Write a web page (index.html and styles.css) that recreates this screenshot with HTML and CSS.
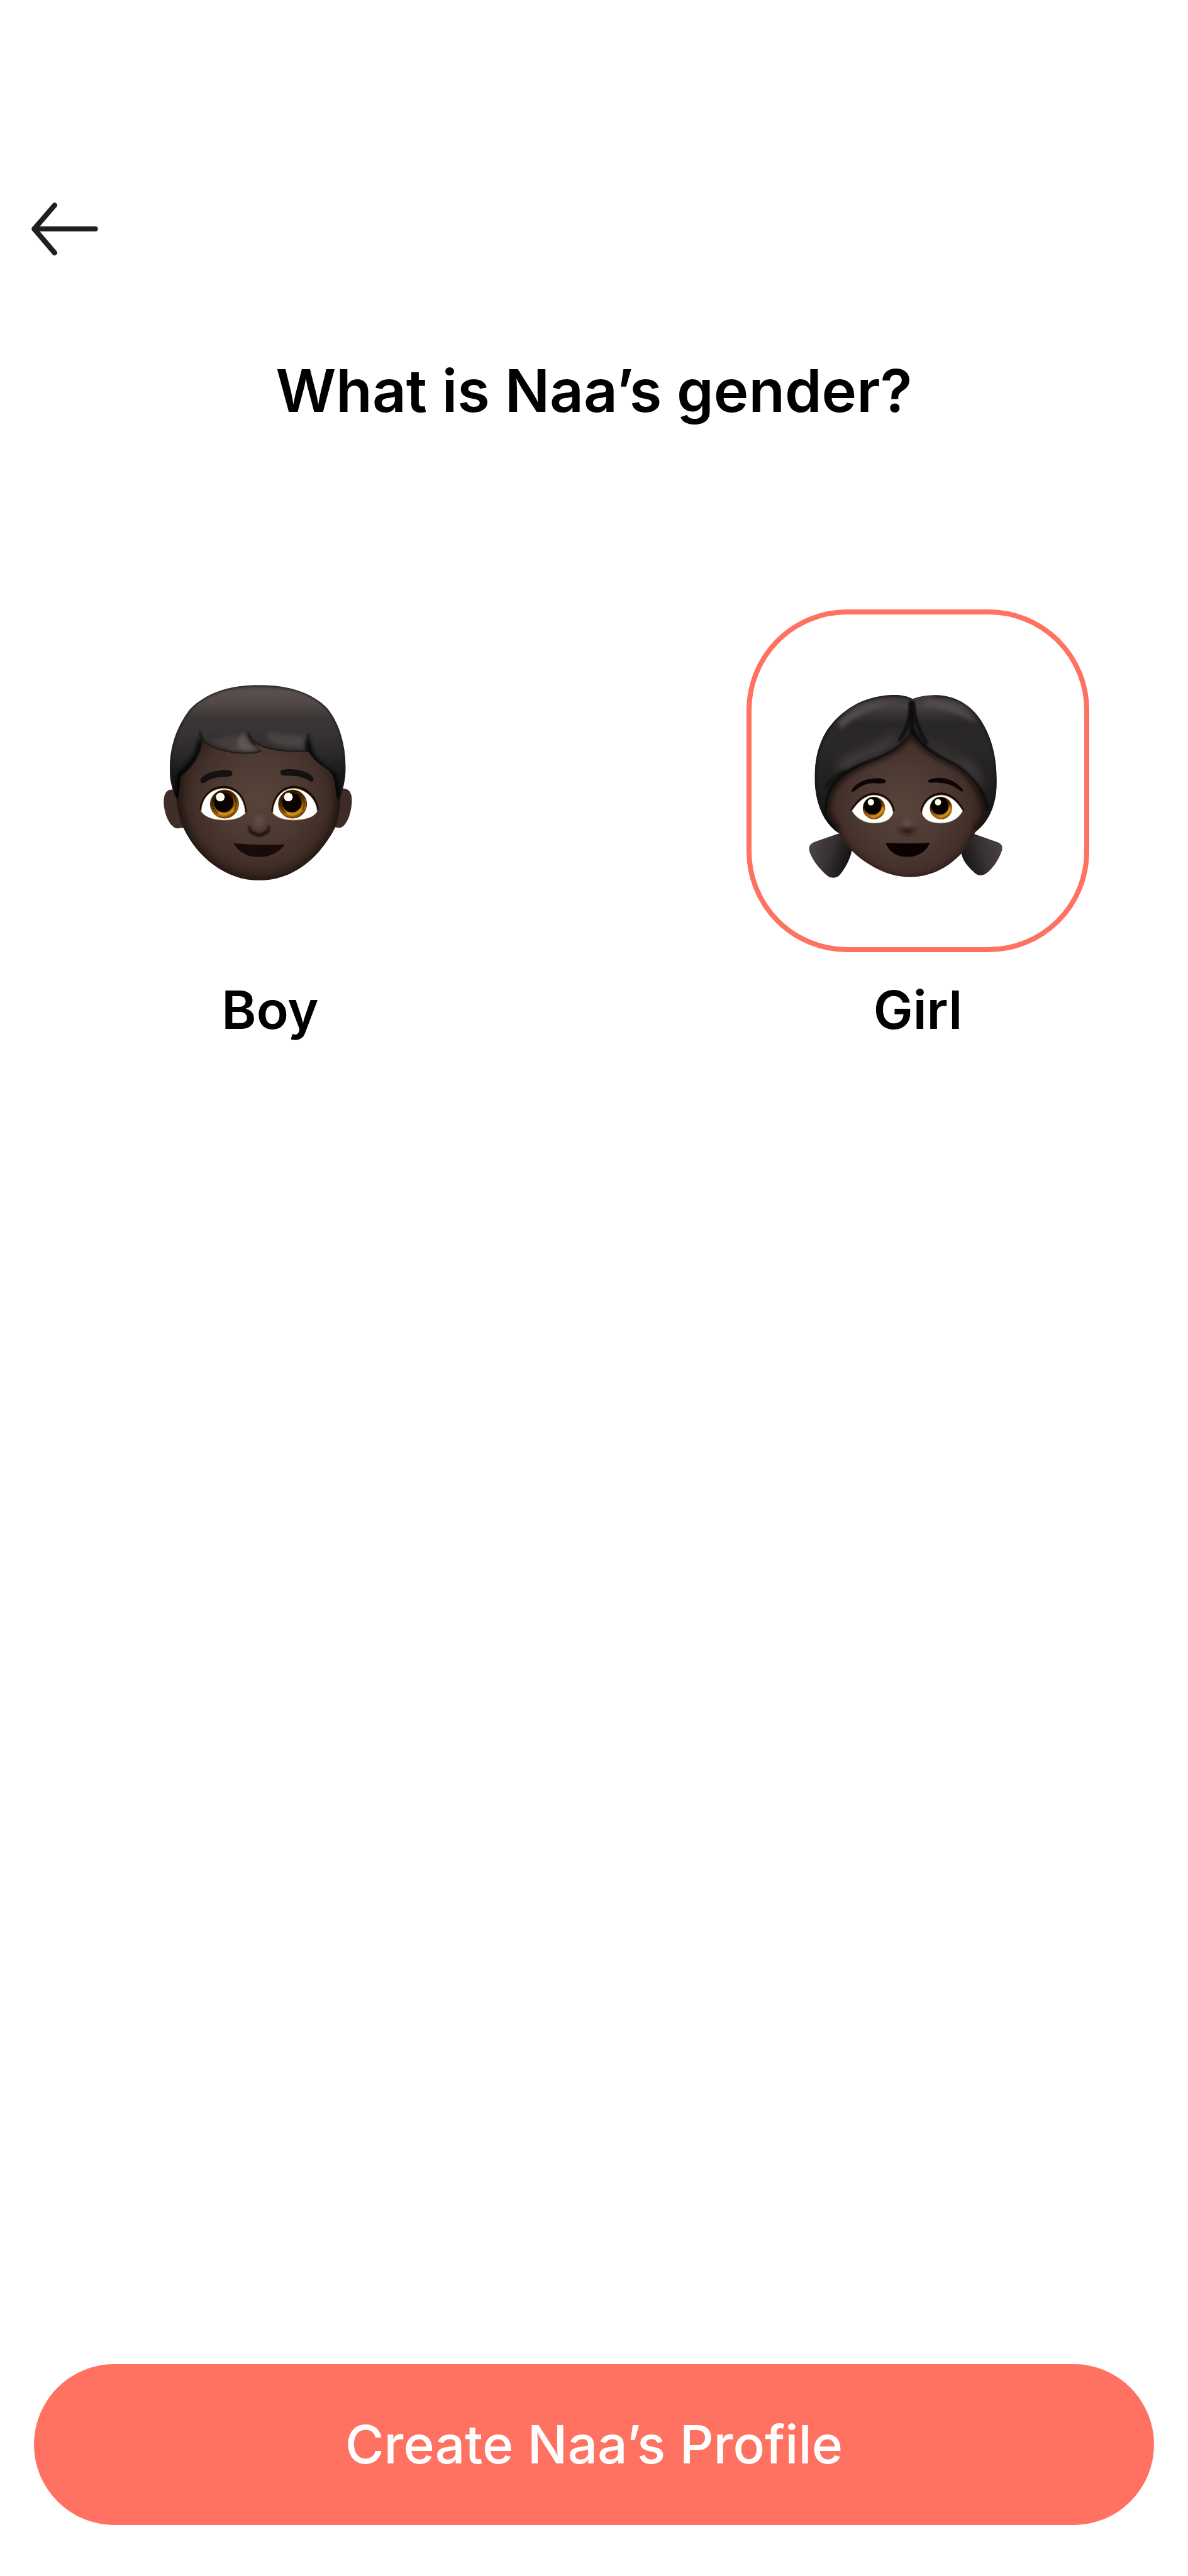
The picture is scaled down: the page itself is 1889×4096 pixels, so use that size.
FILE: index.html
```html
<!DOCTYPE html>
<html lang="en">
<head>
<meta charset="utf-8">
<meta name="viewport" content="width=device-width, initial-scale=1">
<title>Create profile</title>
<link rel="stylesheet" href="styles.css">
</head>
<body>
<form class="screen">
  <button class="back" type="button" aria-label="Back">
    <svg class="back-icon" viewBox="99 91 396 324" aria-hidden="true">
      <path d="M480 253H114M236 111L114 253L236 396" fill="none" stroke="#1f1f1f" stroke-width="31" stroke-linecap="round" stroke-linejoin="round"/>
    </svg>
  </button>

  <h1 class="title" id="question">What is Naa’s gender?</h1>

  <div class="options" role="radiogroup" aria-labelledby="question">
    <label class="option">
      <input class="option-box" type="radio" name="gender" value="boy">
      <svg class="avatar" viewBox="-27 0 1320 1320" aria-hidden="true">
        <defs>
          <radialGradient id="skin" gradientUnits="userSpaceOnUse" cx="640" cy="760" r="540">
            <stop offset="0" stop-color="#57443a"/><stop offset=".45" stop-color="#4d3a33"/><stop offset=".72" stop-color="#44302b"/><stop offset=".9" stop-color="#2f201a"/><stop offset="1" stop-color="#2a1c17"/>
          </radialGradient>
          <linearGradient id="boyHair" gradientUnits="userSpaceOnUse" x1="0" y1="87" x2="0" y2="770">
            <stop offset="0" stop-color="#4a4141"/><stop offset=".06" stop-color="#594f4e"/><stop offset=".16" stop-color="#524848"/><stop offset=".28" stop-color="#3c3737"/><stop offset=".42" stop-color="#373333"/><stop offset=".6" stop-color="#2b2929"/><stop offset=".8" stop-color="#181818"/><stop offset="1" stop-color="#101010"/>
          </linearGradient>
          <linearGradient id="iris" x1="0" y1="0" x2=".35" y2="1">
            <stop offset="0" stop-color="#1a0b00"/><stop offset=".45" stop-color="#522b03"/><stop offset=".85" stop-color="#b06c0a"/><stop offset="1" stop-color="#7a4505"/>
          </linearGradient>
          <filter id="soft6" x="-50%" y="-50%" width="200%" height="200%"><feGaussianBlur stdDeviation="6"/></filter>
          <filter id="soft14" x="-50%" y="-50%" width="200%" height="200%"><feGaussianBlur stdDeviation="14"/></filter>
          <filter id="soft30" x="-50%" y="-50%" width="200%" height="200%"><feGaussianBlur stdDeviation="30"/></filter>
          <clipPath id="boyHairClip"><path d="M152 768C132 740 118 690 110 640C98 480 140 350 225 235C330 125 480 87 640 87C810 87 960 130 1050 230C1130 330 1163 480 1155 620C1148 680 1136 740 1112 776C1099 760 1099 700 1090 655C1080 610 1050 590 1010 565C975 540 950 510 935 485C880 488 800 488 720 473C680 465 640 452 606 428C620 450 636 464 657 478C640 497 590 498 520 496C440 490 350 465 303 420C295 490 265 560 175 630C165 680 168 740 152 768Z"/></clipPath>
          <clipPath id="boyFaceClip"><path d="M140 600C140 750 150 860 190 940C270 1110 440 1252 640 1252C840 1252 1000 1120 1095 935C1130 860 1130 700 1125 600C1100 350 900 300 640 300C350 300 150 400 140 600Z"/></clipPath>
        </defs>
        <path fill="#402e29" d="M130 712C90 705 70 735 72 790C75 860 110 940 155 942C175 942 200 936 200 936L180 700Z"/>
        <path fill="#3e2b26" d="M1140 705C1180 702 1197 735 1193 790C1187 870 1155 935 1120 938C1105 938 1085 933 1085 933L1105 720Z"/>
        <g clip-path="url(#boyFaceClip)">
          <path fill="url(#skin)" d="M130 280H1140V1260H130Z"/>
          <path d="M160 600C150 760 165 860 195 935C270 1110 440 1258 640 1258C840 1258 1000 1120 1090 935C1115 860 1120 760 1115 640" fill="none" stroke="#1f130c" stroke-width="32" filter="url(#soft14)" opacity=".65"/>
        </g>
        <g clip-path="url(#boyHairClip)">
          <path fill="url(#boyHair)" d="M90 70H1170V790H90Z"/>
          <path d="M152 768C132 740 118 690 110 640C98 480 140 350 225 235C330 125 480 87 640 87C810 87 960 130 1050 230C1130 330 1163 480 1155 620C1148 680 1136 740 1112 776" fill="none" stroke="#1f1b1b" stroke-width="18" filter="url(#soft6)" opacity=".6"/>
          <path d="M450 455Q560 500 640 474Q570 430 550 370Z" fill="#5f5555" filter="url(#soft14)"/>
          <path d="M690 420Q820 480 925 460L910 390Q800 380 690 370Z" fill="#4a4242" filter="url(#soft14)"/>
          <path d="M340 420Q430 480 520 470L500 380Z" fill="#443d3d" filter="url(#soft14)"/>
          <path d="M290 410C290 480 255 550 165 625L150 780M932 420C932 490 970 555 1085 630L1110 780" fill="none" stroke="#050505" stroke-width="28" filter="url(#soft14)"/>
          <path d="M286 365Q292 395 304 415M575 370Q582 405 610 432M935 380L932 480" fill="none" stroke="#0c0b0b" stroke-width="10" filter="url(#soft6)"/>
          <path d="M303 424C350 468 440 493 520 499C590 502 640 499 657 480M606 430C640 455 680 468 720 476C800 491 880 491 935 488" fill="none" stroke="#0b0908" stroke-width="11" filter="url(#soft6)"/>
        </g>
        <path d="M290 655C300 615 380 595 440 594C470 594 481 600 481 614C481 630 468 634 440 634C390 635 350 645 318 668C300 677 288 670 290 655Z" fill="#131111"/>
        <path d="M768 608C768 594 780 590 815 589C880 588 955 612 965 645C968 662 957 668 942 660C905 636 870 627 800 627C778 627 768 622 768 608Z" fill="#131111"/>
        <path d="M293 835C296 760 350 697 430 695C510 697 555 765 560 845" fill="none" stroke="#160b03" stroke-width="14"/>
        <path d="M295 842C298 760 350 705 430 703C510 705 555 770 558 852C530 882 490 893 430 893C370 892 320 878 295 842Z" fill="#fff" stroke="#8b6a32" stroke-width="3"/>
        <circle cx="434" cy="797" r="84" fill="url(#iris)" stroke="#5a3509" stroke-width="4"/>
        <circle cx="434" cy="797" r="70" fill="none" stroke="#2c1401" stroke-width="6" opacity=".6"/>
        <path d="M398 850Q445 880 490 830" fill="none" stroke="#f0a51c" stroke-width="13" filter="url(#soft6)"/>
        <circle cx="430" cy="788" r="58" fill="#0b0300"/>
        <circle cx="409" cy="755" r="26" fill="#fffdf4"/>
        <path d="M720 845C724 765 770 697 847 695C925 697 985 760 989 835" fill="none" stroke="#160b03" stroke-width="14"/>
        <path d="M722 852C725 770 770 705 845 703C920 705 985 770 987 842C965 880 910 892 850 893C790 893 750 882 722 852Z" fill="#fff" stroke="#8b6a32" stroke-width="3"/>
        <circle cx="840" cy="797" r="84" fill="url(#iris)" stroke="#5a3509" stroke-width="4"/>
        <circle cx="840" cy="797" r="70" fill="none" stroke="#2c1401" stroke-width="6" opacity=".6"/>
        <path d="M804 850Q851 880 896 830" fill="none" stroke="#f0a51c" stroke-width="13" filter="url(#soft6)"/>
        <circle cx="836" cy="788" r="58" fill="#0b0300"/>
        <circle cx="815" cy="755" r="26" fill="#fffdf4"/>
        <ellipse cx="640" cy="895" rx="30" ry="34" fill="#605047" filter="url(#soft14)"/>
        <path d="M580 925Q590 962 615 965Q640 985 665 965Q692 960 700 925Q708 975 670 980Q640 1000 610 980Q572 970 580 925Z" fill="#170c09" stroke="#1e120e" stroke-width="8" filter="url(#soft6)" opacity=".85"/>
        <path d="M487 1031Q640 1045 793 1037C765 1085 700 1113 640 1113C570 1113 520 1085 487 1031Z" fill="#190b0a"/>
      </svg>
      <span class="option-name">Boy</span>
    </label>

    <label class="option">
      <input class="option-box" type="radio" name="gender" value="girl" checked>
      <svg class="avatar" viewBox="-9 -60 1320 1320" aria-hidden="true">
        <defs>
          <linearGradient id="girlHair" gradientUnits="userSpaceOnUse" x1="0" y1="87" x2="0" y2="910">
            <stop offset="0" stop-color="#3b3535"/><stop offset=".08" stop-color="#454041"/><stop offset=".2" stop-color="#292626"/><stop offset=".35" stop-color="#2b2828"/><stop offset=".6" stop-color="#222020"/><stop offset="1" stop-color="#151414"/>
          </linearGradient>
          <linearGradient id="tailLeft" x1="0" y1=".3" x2="1" y2=".6">
            <stop offset="0" stop-color="#4b4344"/><stop offset=".5" stop-color="#353031"/><stop offset="1" stop-color="#0f0e0e"/>
          </linearGradient>
          <linearGradient id="tailRight" x1="1" y1=".3" x2="0" y2=".6">
            <stop offset="0" stop-color="#4b4344"/><stop offset=".5" stop-color="#353031"/><stop offset="1" stop-color="#151313"/>
          </linearGradient>
          <clipPath id="girlHairClip"><path d="M692 110C655 90 610 85 560 87C400 95 270 170 180 300C120 400 105 500 110 620C120 740 160 850 255 912L1065 905C1140 850 1185 760 1193 640C1200 480 1170 330 1080 210C1010 120 910 85 820 87C770 88 730 95 692 110Z"/></clipPath>
          <clipPath id="girlFaceClip"><path d="M685 312C640 390 560 440 470 475C400 500 320 540 280 575C215 620 180 700 182 790C190 830 222 850 242 885C290 990 360 1050 440 1100C520 1150 600 1172 680 1172C800 1170 900 1120 985 1030C1040 975 1050 930 1075 890C1100 850 1130 830 1130 790C1125 700 1090 640 1020 560C960 510 890 480 840 455C770 410 720 370 685 312Z"/></clipPath>
        </defs>
        <path fill="url(#tailLeft)" d="M250 913L110 962C80 975 70 990 78 1020C95 1075 150 1140 195 1172C225 1182 245 1174 262 1155C295 1110 318 1070 330 1015L300 920Z"/>
        <path fill="url(#tailRight)" d="M1060 915L1200 965C1225 975 1232 990 1225 1015C1205 1070 1170 1125 1125 1155C1095 1168 1075 1162 1055 1140C1020 1105 995 1080 983 1030L1010 930Z"/>
        <g clip-path="url(#girlHairClip)">
          <path fill="url(#girlHair)" d="M90 70H1210V920H90Z"/>
          <path d="M250 240Q400 120 620 115Q420 160 260 290ZM760 115Q960 110 1080 260Q920 160 760 150Z" fill="#554b4c" filter="url(#soft14)"/>
          <path d="M270 470Q480 400 610 300Q580 400 420 460Q330 500 240 560ZM740 330Q820 440 960 490Q1050 550 1100 660Q1110 560 1030 480Q860 440 740 330Z" fill="#4a4243" filter="url(#soft30)"/>
          <path d="M692 110C655 88 610 85 560 87C400 95 270 170 180 300C120 400 105 500 110 620C120 740 160 850 255 912M1065 905C1140 850 1185 760 1193 640C1200 480 1170 330 1080 210C1010 120 910 85 820 87" fill="none" stroke="#141212" stroke-width="20" filter="url(#soft6)" opacity=".7"/>
          <path d="M688 120V330C620 410 540 450 460 480C380 505 290 545 240 600C190 660 175 740 190 820L230 900M688 290C740 400 830 450 900 485C1010 540 1110 640 1135 770" fill="none" stroke="#070707" stroke-width="26" filter="url(#soft6)"/>
          <path d="M680 130C680 220 660 300 610 360M698 130C702 230 730 310 780 375" fill="none" stroke="#090808" stroke-width="18" filter="url(#soft6)"/>
          <path d="M175 635Q220 575 290 535" fill="none" stroke="#0c0b0b" stroke-width="12" filter="url(#soft6)"/>
        </g>
        <g clip-path="url(#girlFaceClip)">
          <path fill="url(#skin)" d="M170 300H1140V1180H170Z"/>
          <path d="M685 300C640 380 560 430 470 465C400 490 320 530 270 575C205 620 172 700 172 790C190 830 222 850 242 885M1075 890C1100 850 1140 830 1140 790C1125 690 1090 630 1020 550C960 500 890 470 840 445C770 400 720 360 685 300" fill="none" stroke="#150d09" stroke-width="42" filter="url(#soft14)" opacity=".85"/>
          <path d="M235 870C290 990 360 1055 440 1108C520 1158 600 1180 680 1180C800 1178 900 1128 990 1035C1045 975 1055 930 1080 890" fill="none" stroke="#271710" stroke-width="28" filter="url(#soft14)" opacity=".7"/>
        </g>
        <path d="M330 660C328 640 380 590 460 584C510 580 533 590 533 602C533 614 515 616 480 613C420 609 390 625 345 660C338 666 331 665 330 660Z" fill="#0d0504"/>
        <path d="M785 602C785 590 810 580 860 580C930 584 985 635 992 655C992 664 985 664 975 656C930 622 900 612 845 609C810 608 785 614 785 602Z" fill="#0d0504"/>
        <path d="M326 776C360 720 405 678 460 675C532 678 575 725 580 780M745 785C752 720 800 677 865 674C925 677 965 720 995 776" fill="none" stroke="#1c0704" stroke-width="12"/>
        <path d="M330 777C370 720 410 685 460 683C530 685 570 730 577 790C560 835 520 851 460 851C410 850 360 828 330 777Z" fill="#fff" stroke="#8b7a55" stroke-width="3"/>
        <path d="M748 790C755 730 800 685 865 683C920 685 960 725 992 777C965 828 920 850 860 851C800 851 760 832 748 790Z" fill="#fff" stroke="#8b7a55" stroke-width="3"/>
        <circle cx="462" cy="761" r="67" fill="url(#iris)"/>
        <path d="M445 814Q508 815 515 755" fill="none" stroke="#eda01a" stroke-width="12" filter="url(#soft6)"/>
        <circle cx="455" cy="748" r="52" fill="#040100"/>
        <circle cx="444" cy="726" r="19" fill="#fffbe9"/>
        <circle cx="862" cy="761" r="67" fill="url(#iris)"/>
        <path d="M845 814Q908 815 915 755" fill="none" stroke="#eda01a" stroke-width="12" filter="url(#soft6)"/>
        <circle cx="855" cy="748" r="52" fill="#040100"/>
        <circle cx="844" cy="726" r="19" fill="#fffbe9"/>
        <ellipse cx="660" cy="852" rx="30" ry="20" fill="#645249" filter="url(#soft14)"/>
        <path d="M612 880Q660 892 710 880Q705 915 660 915Q618 915 612 880Z" fill="#251712" filter="url(#soft14)"/>
        <path d="M532 968Q660 974 795 968C775 1022 720 1052 662 1052C600 1052 550 1022 532 968Z" fill="#0b0201"/>
      </svg>
      <span class="option-name">Girl</span>
    </label>
  </div>

  <button class="submit" type="submit">Create Naa’s Profile</button>
</form>
</body>
</html>
```
FILE: styles.css
```css
* {
  box-sizing: border-box;
}

body {
  margin: 0;
  background: #fff;
  color: #000;
  font-family: Inter, "Open Sans", sans-serif;
}

.screen {
  display: flex;
  flex-direction: column;
  min-height: 100vh;
  padding: 321px 54px 81px;
}

.back {
  align-self: flex-start;
  display: flex;
  margin-left: -4px;
  padding: 0;
  border: 0;
  background: none;
  cursor: pointer;
}

.back-icon {
  width: 106px;
  height: 86px;
}

.title {
  margin: 158px 0 0;
  font-size: 94px;
  font-weight: 600;
  line-height: 112px;
  text-align: center;
}

.options {
  display: flex;
  justify-content: space-between;
  margin-top: 292px;
  padding: 0 103px;
}

.option {
  display: grid;
  justify-items: center;
  row-gap: 44px;
  cursor: pointer;
}

.option-box,
.avatar {
  grid-area: 1 / 1;
}

.option-box {
  appearance: none;
  width: 545px;
  height: 545px;
  margin: 0;
  border: 8px solid transparent;
  border-radius: 160px;
  cursor: pointer;
}

.option-box:checked {
  border-color: #ff7262;
}

.avatar {
  align-self: center;
  width: 352px;
  height: 352px;
  margin-right: 40px;
  pointer-events: none;
}

.option-name {
  font-size: 84px;
  font-weight: 600;
  line-height: 96px;
}

.submit {
  height: 256px;
  margin-top: auto;
  border: 0;
  border-radius: 128px;
  background: #ff7262;
  color: #fff;
  font-family: inherit;
  font-size: 84px;
  font-weight: 500;
  line-height: 96px;
  cursor: pointer;
}
```
